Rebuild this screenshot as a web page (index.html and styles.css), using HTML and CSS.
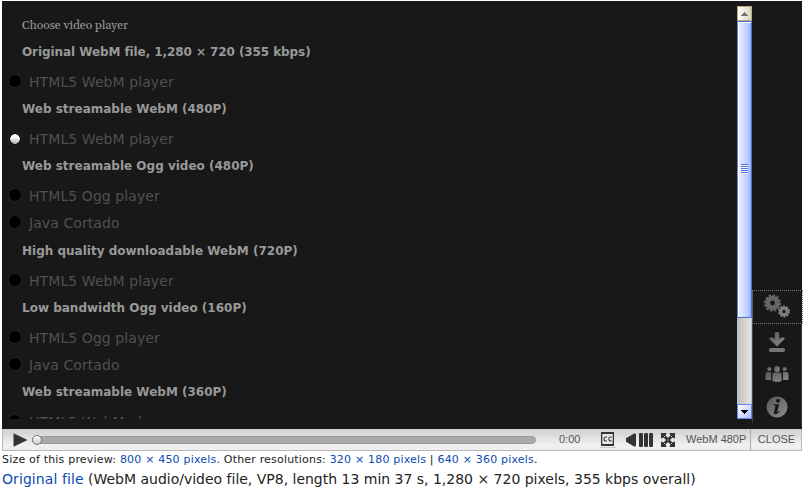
FILE: index.html
```html
<!DOCTYPE html>
<html lang="en">
<head>
<meta charset="utf-8">
<title>Video player</title>
<link rel="stylesheet" href="styles.css">
</head>
<body>
<main class="player">
  <div class="screen">
    <section class="choices">
      <h2 class="title">Choose video player</h2>
      <h3 class="original">Original WebM file, 1,280 × 720 (355 kbps)</h3>
      <div class="option"><i class="radio"></i>HTML5 WebM player</div>
      <h3>Web streamable WebM (480P)</h3>
      <div class="option"><i class="radio selected"></i>HTML5 WebM player</div>
      <h3>Web streamable Ogg video (480P)</h3>
      <div class="option"><i class="radio"></i>HTML5 Ogg player</div>
      <div class="option last"><i class="radio"></i>Java Cortado</div>
      <h3>High quality downloadable WebM (720P)</h3>
      <div class="option"><i class="radio"></i>HTML5 WebM player</div>
      <h3>Low bandwidth Ogg video (160P)</h3>
      <div class="option"><i class="radio"></i>HTML5 Ogg player</div>
      <div class="option"><i class="radio"></i>Java Cortado</div>
      <h3>Web streamable WebM (360P)</h3>
      <div class="option"><i class="radio"></i>HTML5 WebM player</div>
    </section>
    <div class="scrollbar">
      <div class="sb-up"><svg width="7" height="4" viewBox="0 0 7 4" shape-rendering="crispEdges"><path d="M3 0h1v1h1v1h1v1h1v1H0V3h1V2h1V1h1z" fill="#77756c"/></svg></div>
      <div class="thumb"><div class="grip"></div></div>
      <div class="track"></div>
      <div class="sb-down"><svg width="7" height="4" viewBox="0 0 7 4" shape-rendering="crispEdges"><path d="M0 0h7v1H6v1H5v1H4v1H3V3H2V2H1V1H0z" fill="#000"/></svg></div>
    </div>
    <nav class="side">
      <div class="tool focus">
        <svg width="28" height="26" viewBox="0 0 28 26">
          <defs><linearGradient id="g" x1="0" y1="0" x2="1" y2="1"><stop offset="0" stop-color="#555"/><stop offset="1" stop-color="#8c8c8c"/></linearGradient></defs>
          <g fill="none">
            <circle cx="9.5" cy="10" r="4.8" stroke="#666" stroke-width="4.8"/>
            <circle cx="9.5" cy="10" r="7.6" stroke="#666" stroke-width="2" stroke-dasharray="2.4 1.579"/>
            <circle cx="21" cy="18.5" r="3.3" stroke="#7e7e7e" stroke-width="3.2"/>
            <circle cx="21" cy="18.5" r="5.2" stroke="#7e7e7e" stroke-width="1.6" stroke-dasharray="2 1.267"/>
          </g>
        </svg>
      </div>
      <div class="tool download">
        <svg width="18" height="20" viewBox="0 0 18 20"><path d="M6.8 1.3Q6.8 0 9 0t2.2 1.3v5.4l3-1.5Q17.5 5.3 16.4 7.2L9 14.4 1.6 7.2Q.5 5.3 3.8 5.2l3 1.5z" fill="url(#g)"/><rect x="1" y="16" width="16" height="4" rx="1.8" fill="#777"/></svg>
      </div>
      <div class="tool people">
        <svg width="24" height="16" viewBox="0 0 24 16" fill="url(#g)"><circle cx="12" cy="3" r="2.9"/><circle cx="4.3" cy="3" r="2.1"/><circle cx="19.5" cy="3" r="2.1"/><path d="M7.4 15V8.2q0-1.7 2-1.7h5.2q2 0 2 1.7V15q-4.6 1.8-9.2 0zM.5 13.5V8q0-2 2-2h3.9q-.4.8-.4 2v6H2q-1.5 0-1.5-.5zM18 14V8q0-1-.3-2h3.8q2 0 2 2v5.5q0 .5-1.5.5z"/></svg>
      </div>
      <div class="tool info">
        <svg width="22" height="22" viewBox="0 0 22 22"><circle cx="11" cy="11" r="10.5" fill="url(#g)"/><circle cx="12" cy="4.8" r="2" fill="#171717"/><path d="M8 8.3h5.2l-2 7.4q0 1 2-.6l.5.7Q8 20.3 7.8 16.7L9.5 10q0-.8-1.7-.8z" fill="#171717"/></svg>
      </div>
    </nav>
  </div>
  <div class="controls">
    <svg class="play" width="15" height="14" viewBox="0 0 15 14"><path d="M.5.2 14.5 7 .5 13.8z" fill="#333"/></svg>
    <div class="seek"><i class="knob"></i></div>
    <span class="time">0:00</span>
    <svg class="cc" width="16" height="16" viewBox="0 0 16 16"><path d="M1 0h13v14H1z" fill="#333"/><path d="M2.3 2h10.4v10H2.3z" fill="#e8e8e8"/><path d="M7 5H5.6Q4 5 4 7t1.6 2H7M11.8 5h-1.4Q8.8 5 8.8 7t1.6 2h1.4" fill="none" stroke="#333" stroke-width="1.1"/><path d="M0 15.5h16" stroke="#bbb" stroke-width=".7"/></svg>
    <svg class="volume" width="28" height="14" viewBox="0 0 28 14" fill="#333"><path d="M0 5.5Q0 4.5 1.5 4.5L8 .6Q10 0 10 1.5v11q0 1.5-2 .9L1.5 9.5Q0 9.5 0 8.5z"/><rect x="13" width="4" height="14" rx="1.3"/><rect x="18" width="4" height="14" rx="1.3"/><rect x="23" width="4" height="14" rx="1.3"/></svg>
    <svg class="full" width="14" height="14" viewBox="0 0 14 14" fill="#333"><path d="M0 0h5.5L4.6 2.8 7 5l2.4-2.2L8.5 0H14v5.5l-2.8-.9L9 7l2.2 2.4 2.8-.9V14H8.5l.9-2.8L7 9l-2.4 2.2.9 2.8H0V8.5l2.8.9L5 7 2.8 4.6 0 5.5z"/><path d="M3 3 11 11M11 3 3 11" stroke="#333" stroke-width="2.4"/><path d="M6.4 6.4h1.2v1.2H6.4zM3 3h1v1H3zM10 3h1v1h-1zM3 10h1v1H3zM10 10h1v1h-1z" fill="#ccc"/></svg>
    <span class="source">WebM 480P</span>
    <span class="close">CLOSE</span>
  </div>
</main>
<p class="sizes"><span>Size of this preview: <a>800 × 450 pixels</a>. Other resolutions: <a>320 × 180 pixels</a> | <a>640 × 360 pixels</a>.</span></p>
<p class="file"><a>Original file</a> (WebM audio/video file, VP8, length 13 min 37 s, 1,280 × 720 pixels, 355 kbps overall)</p>
</body>
</html>
```
FILE: styles.css
```css
* { box-sizing: border-box; }
body { margin: 0; padding: 1px 0 0 2px; width: 803px; height: 488px; overflow: hidden; background: #fff; color: #222; font-family: "DejaVu Sans", sans-serif; }
p, h2, h3 { margin: 0; }
.player { width: 800px; }
.screen { display: flex; height: 428px; background: #181818; }
.choices { width: 735px; height: 418px; padding: 16px 0 0 6px; overflow: hidden; }
.title { height: 20px; padding-left: 14px; font: 12px/18px Gelasio, Georgia, "Liberation Serif", serif; color: #999; }
h3 { height: 30px; padding-left: 14px; font-size: 12px; line-height: 30px; color: #999; }
.original { letter-spacing: -.08px; }
.option { display: flex; height: 27px; padding-top: 1px; font-size: 14px; line-height: 28px; letter-spacing: .08px; color: #505050; }
.option.last { height: 28px; }
.radio { width: 14px; height: 14px; margin: 6px 7px 0 0; border: 1px solid #252525; border-radius: 50%; background: #000; }
.radio.selected { margin-top: 7px; background: radial-gradient(circle at 50% 50%, transparent 4.5px, #000 5.2px), linear-gradient(#fff 35%, #bbb 80%); }
.scrollbar { display: flex; flex-direction: column; width: 15px; height: 413px; margin-top: 5px; }
.sb-up { display: flex; align-items: center; justify-content: center; height: 15px; border: 1px solid #bba982; background: linear-gradient(90deg, #fff, #d8d4c4); }
.thumb { display: flex; align-items: center; justify-content: center; height: 297px; padding-bottom: 2px; border: 1px solid #5070d0; border-left-color: #6c82c8; box-shadow: inset 1px 1px #fff; background: linear-gradient(90deg, #eef2ff, #b8c8ff 80%, #91a8f2); }
.grip { width: 7px; height: 10px; background: repeating-linear-gradient(#4c70d8 0 1px, #f4f7ff 1px 2px); }
.track { flex: 1; border: solid #abc0ef; border-width: 0 1px; background: linear-gradient(90deg, #c2c1b7, #e5e5df); }
.sb-down { display: flex; align-items: center; justify-content: center; height: 15px; border: 1px solid #6286ed; background: linear-gradient(135deg, #fff, #adc1ff); }
.side { width: 51px; height: 133px; margin-top: 289px; margin-right: -1px; border-left: 1px solid #444; }
.tool { display: flex; justify-content: center; height: 34px; }
.focus { margin-left: -1px; border: 1px dotted #777; padding: 2px 2px 0 0; }
.download { padding-top: 8px; }
.people { padding-top: 8px; }
.info { padding-top: 4px; }
.download, .people, .info { margin-right: 1px; border-right: 1px solid #333; }
.controls { display: flex; height: 22px; border: solid #b9b9b9; border-width: 0 1px 1px; background: linear-gradient(#cfcfcf, #f0f0f0 75%, #eee); color: #555; font: 11px/21px "Liberation Sans", sans-serif; }
.play { margin: 4px 4px 0 10px; }
.seek { width: 504px; height: 8px; margin-top: 7px; border: 1px solid #999; border-radius: 4px; background: #aaa; }
.knob { display: block; width: 10px; height: 10px; margin: -2px 0 0 -1px; border: 1px solid #777; border-radius: 50%; background: linear-gradient(#fff, #ccc); }
.time { width: 41px; margin-left: 23px; }
.cc { margin-top: 3px; }
.volume { margin: 4px 0 0 10px; }
.full { margin: 4px 0 0 7px; }
.source { width: 64px; margin-left: 11px; white-space: nowrap; }
.close { flex: 1; padding-left: 1px; border-left: 1px solid #aaa; text-align: center; }
.sizes { height: 18px; font-size: 11px; line-height: 17px; letter-spacing: .19px; white-space: nowrap; }
.file { font-size: 14px; line-height: 20px; letter-spacing: -.01px; white-space: nowrap; }
.file a { letter-spacing: .08px; }
a { color: #0b4bb3; }
```
